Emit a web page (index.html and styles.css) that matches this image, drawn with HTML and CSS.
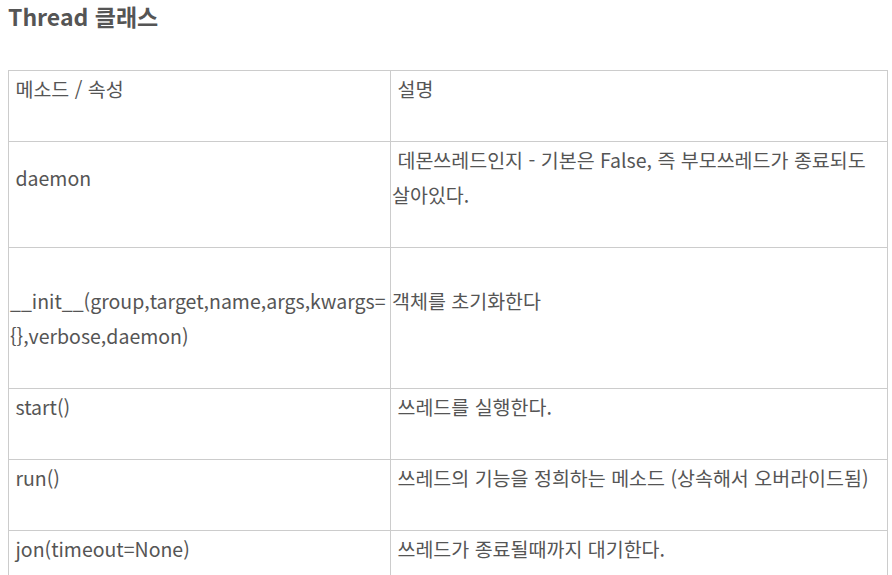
FILE: index.html
```html
<!DOCTYPE html>
<html lang="ko">
<head>
<meta charset="utf-8">
<link rel="stylesheet" href="styles.css">
</head>
<body>
<h3 class="title">Thread 클래스</h3>
<table class="api">
  <colgroup><col class="c1"><col class="c2"></colgroup>
  <tr>
    <td>&nbsp;메소드 / 속성<br>&nbsp;</td>
    <td>&nbsp;설명<br>&nbsp;</td>
  </tr>
  <tr>
    <td>&nbsp;daemon<br>&nbsp;</td>
    <td>&nbsp;데몬쓰레드인지 - 기본은 False, 즉 부모쓰레드가 종료되도 살아있다.<br>&nbsp;</td>
  </tr>
  <tr>
    <td>&nbsp;<br>__init__(group,target,name,args,kwargs=<wbr>{},verbose,daemon)<br>&nbsp;</td>
    <td>객체를 초기화한다<br>&nbsp;</td>
  </tr>
  <tr>
    <td>&nbsp;start()<br>&nbsp;</td>
    <td>&nbsp;쓰레드를 실행한다.<br>&nbsp;</td>
  </tr>
  <tr>
    <td>&nbsp;run()<br>&nbsp;</td>
    <td>&nbsp;쓰레드의 기능을 정희하는 메소드 (상속해서 오버라이드됨)<br>&nbsp;</td>
  </tr>
  <tr>
    <td>&nbsp;jon(timeout=None)<br>&nbsp;</td>
    <td>&nbsp;쓰레드가 종료될때까지 대기한다.<br>&nbsp;</td>
  </tr>
</table>
</body>
</html>
```

FILE: styles.css
```css
html, body {
  margin: 0;
  background: #fff;
}
body {
  padding: 0 5px 0 8px;
  font-family: "Noto Sans CJK KR", "Noto Sans", sans-serif;
  color: #555;
}
.title {
  margin: 0;
  padding-top: 2px;
  font-size: 23px;
  line-height: 29px;
  font-weight: bold;
  color: #555;
}
.api {
  margin-top: 39px;
  width: 880px;
  border-collapse: collapse;
  table-layout: fixed;
  font-size: 19.5px;
  line-height: 35px;
}
.c1 { width: 382px; }
.api td {
  border: 1px solid #ccc;
  padding: 0 1px;
  vertical-align: middle;
  word-break: keep-all;
  overflow-wrap: break-word;
}
```
